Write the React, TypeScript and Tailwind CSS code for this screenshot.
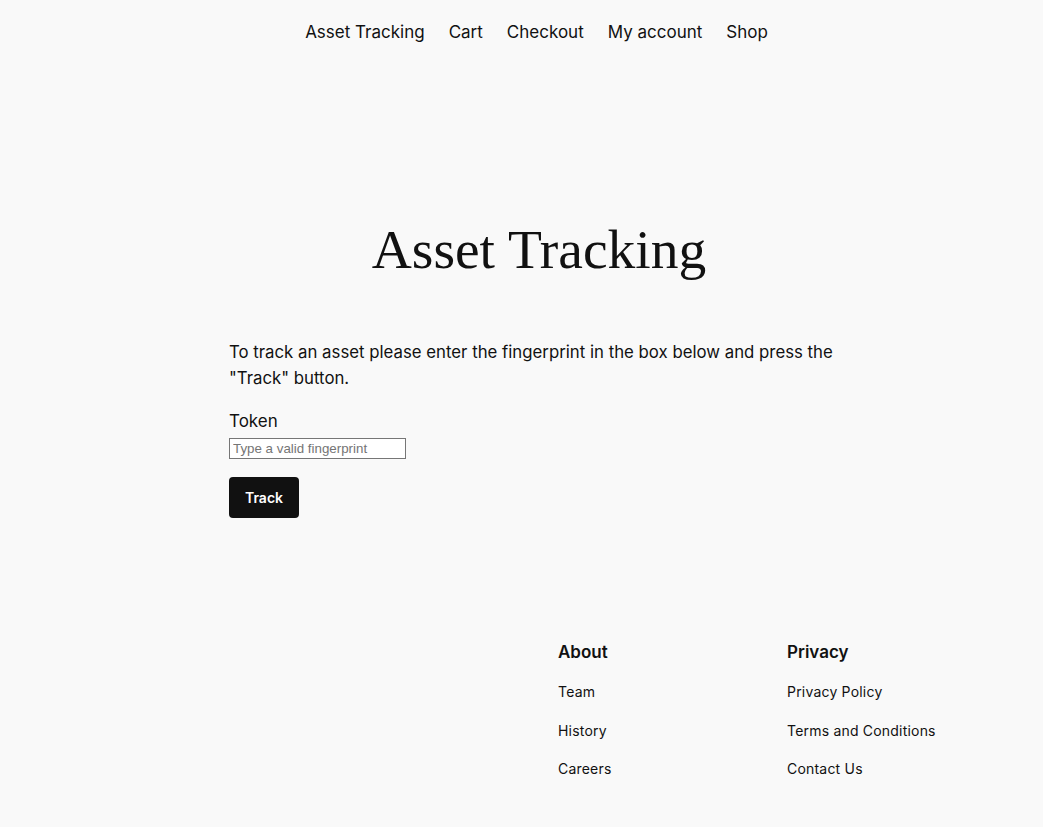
import React from "react";

export default function App() {
  const inter = { fontFamily: "Inter, 'Noto Sans', sans-serif" } as React.CSSProperties;
  return (
    <div className="min-h-[827px] bg-[#f9f9f9] text-[#111111] pl-[35px]" style={inter}>
      <nav className="flex justify-center gap-[24px] pt-[20px] pr-[5px] text-[17px] leading-[24px]">
        <span>Asset Tracking</span>
        <span>Cart</span>
        <span>Checkout</span>
        <span>My account</span>
        <span>Shop</span>
      </nav>
      <main className="mx-auto w-[620px]">
        <h1
          className="mt-[174px] text-center text-[55.5px] leading-[64px] font-normal"
          style={{ fontFamily: "'Liberation Serif', 'DejaVu Serif', serif" }}
        >
          Asset Tracking
        </h1>
        <p className="mt-[57px] text-[16.8px] leading-[26px]">
          To track an asset please enter the fingerprint in the box below and press the "Track" button.
        </p>
        <div className="mt-[18px] text-[17px] leading-[24px]">Token</div>
        <input
          type="text"
          placeholder="Type a valid fingerprint"
          className="mt-[5px] block w-[177px] h-[21px] border border-[#767676] bg-white px-[3px] text-[13.33px] placeholder:text-[#757575] outline-none"
          style={{ fontFamily: "'Liberation Sans', Arial, sans-serif" }}
        />
        <button className="mt-[18px] block w-[70px] h-[41px] rounded-[4px] bg-[#111111] text-white text-[14px] font-semibold">
          Track
        </button>
      </main>
      <footer className="flex pl-[523px] pt-[122px]">
        <div className="w-[229px]">
          <div className="text-[17px] font-semibold leading-[24px]">About</div>
          <ul className="mt-[18px] flex flex-col gap-[18.5px] text-[14px] leading-[20px] tracking-[0.2px]">
            <li>Team</li>
            <li>History</li>
            <li>Careers</li>
          </ul>
        </div>
        <div>
          <div className="text-[17px] font-semibold leading-[24px]">Privacy</div>
          <ul className="mt-[18px] flex flex-col gap-[18.5px] text-[14px] leading-[20px] tracking-[0.2px]">
            <li>Privacy Policy</li>
            <li>Terms and Conditions</li>
            <li>Contact Us</li>
          </ul>
        </div>
      </footer>
    </div>
  );
}
